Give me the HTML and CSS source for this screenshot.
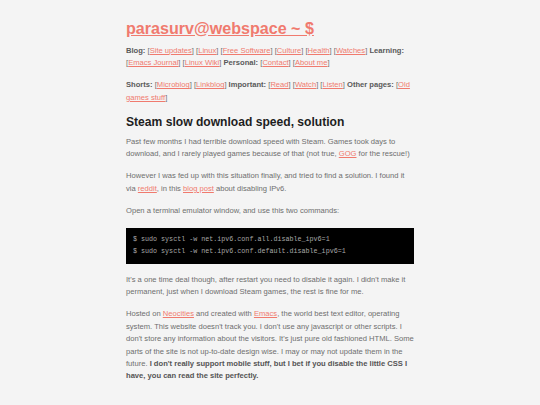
FILE: index.html
```html
<!DOCTYPE html>
<html>
<head>
<meta charset="utf-8">
<link rel="stylesheet" href="styles.css">
</head>
<body>
<div class="page">
  <h1 class="title"><a href="#">parasurv@webspace ~ $</a></h1>
  <p class="nav"><b>Blog:</b> [<a href="#">Site updates</a>] [<a href="#">Linux</a>] [<a href="#">Free Software</a>] [<a href="#">Culture</a>] [<a href="#">Health</a>] [<a href="#">Watches</a>] <b>Learning:</b> [<a href="#">Emacs Journal</a>] [<a href="#">Linux Wiki</a>] <b>Personal:</b> [<a href="#">Contact</a>] [<a href="#">About me</a>]</p>
  <p class="nav"><b>Shorts:</b> [<a href="#">Microblog</a>] [<a href="#">Linkblog</a>] <b>Important:</b> [<a href="#">Read</a>] [<a href="#">Watch</a>] [<a href="#">Listen</a>] <b>Other pages:</b> [<a href="#">Old games stuff</a>]</p>
  <h2 class="heading">Steam slow download speed, solution</h2>
  <p>Past few months I had terrible download speed with Steam. Games took days to download, and I rarely played games because of that (not true, <a href="#">GOG</a> for the rescue!)</p>
  <p>However I was fed up with this situation finally, and tried to find a solution. I found it via <a href="#">reddit</a>, in this <a href="#">blog post</a> about disabling IPv6.</p>
  <p>Open a terminal emulator window, and use this two commands:</p>
  <pre class="code">$ sudo sysctl -w net.ipv6.conf.all.disable_ipv6=1
$ sudo sysctl -w net.ipv6.conf.default.disable_ipv6=1</pre>
  <p>It's a one time deal though, after restart you need to disable it again. I didn't make it permanent, just when I download Steam games, the rest is fine for me.</p>
  <p>Hosted on <a href="#">Neocities</a> and created with <a href="#">Emacs</a>, the world best text editor, operating system. This website doesn't track you. I don't use any javascript or other scripts. I don't store any information about the visitors. It's just pure old fashioned HTML. Some parts of the site is not up-to-date design wise. I may or may not update them in the future. <b>I don't really support mobile stuff, but I bet if you disable the little CSS I have, you can read the site perfectly.</b></p>
</div>
</body>
</html>
```
FILE: styles.css
```css
html, body {
  margin: 0;
  padding: 0;
  background: #f4f4f4;
}
body {
  font-family: "Liberation Sans", Arial, sans-serif;
  font-size: 7.6px;
  line-height: 12.4px;
  color: #6e6e6e;
}
.page {
  width: 288px;
  margin: 0 auto;
  padding-top: 15.5px;
}
a {
  color: #f07a6e;
}
.title {
  margin: 0;
  font-size: 16.1px;
  line-height: 24px;
}
.title a {
  color: #f07a6e;
}
.nav {
  margin: 5.4px 0 9.6px 0;
}
.nav b {
  color: #5a5a5a;
}
p {
  margin: 0 0 10px 0;
}
p b {
  color: #555;
}
.heading {
  margin: 1.3px 0 5.8px 0;
  font-size: 12.1px;
  line-height: 16px;
  color: #1e1e1e;
}
.code {
  background: #000;
  color: #a8a8a8;
  font-family: "Liberation Mono", monospace;
  font-size: 6.7px;
  line-height: 11.5px;
  padding: 6.5px 7px;
  margin: 0 0 10px 0;
}
```
